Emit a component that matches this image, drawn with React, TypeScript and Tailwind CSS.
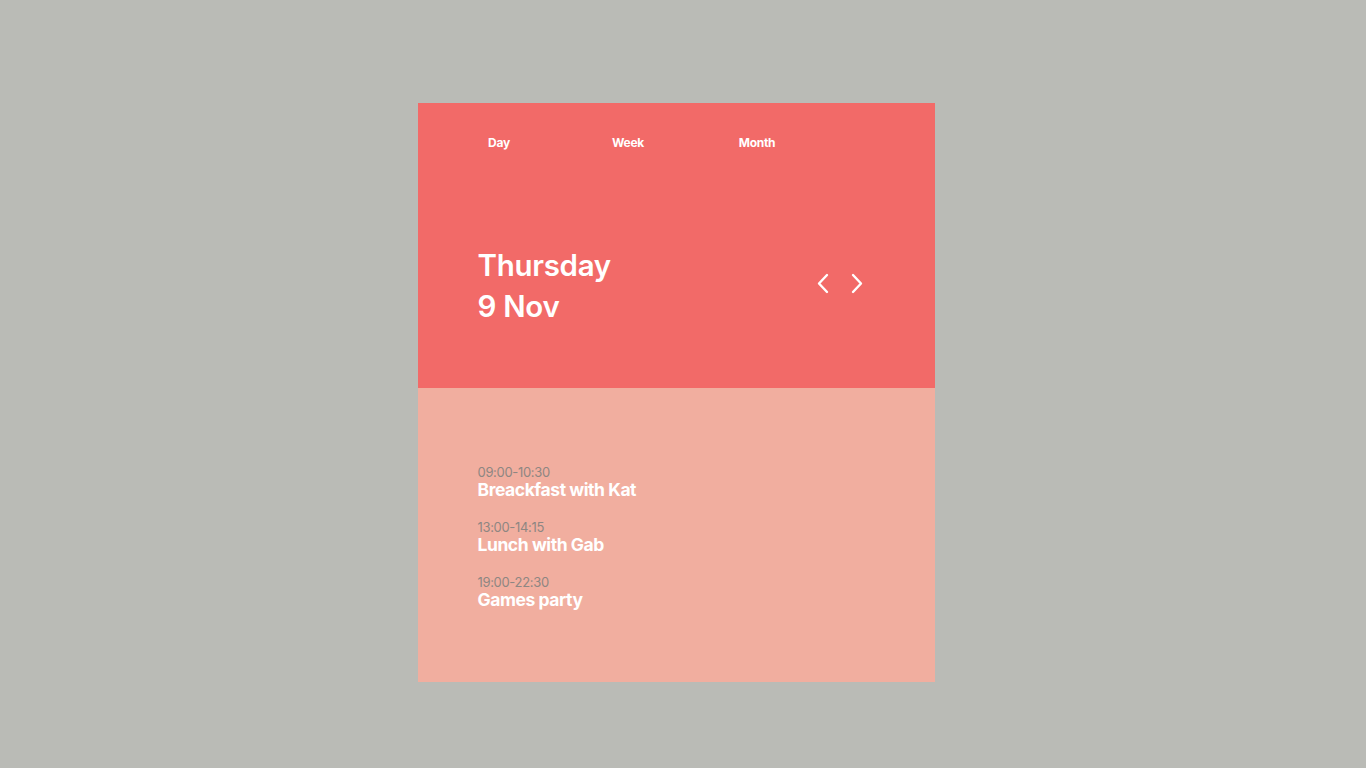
const events = [
  { time: '09:00-10:30', title: 'Breackfast with Kat' },
  { time: '13:00-14:15', title: 'Lunch with Gab' },
  { time: '19:00-22:30', title: 'Games party' },
];

const tabs = ['Day', 'Week', 'Month'];

export default function App() {
  return (
    <div
      className="min-h-screen w-full bg-[#babbb6] flex justify-center pt-[103px] pr-[14px]"
      style={{ fontFamily: 'Inter, "Noto Sans", sans-serif' }}
    >
      <div className="w-[517px] h-[579px] flex flex-col">
        <div className="h-[285px] bg-[#f26a68] flex flex-col">
          <nav className="flex pt-[31px] pl-[17px]">
            {tabs.map((tab) => (
              <button
                key={tab}
                className="w-[129px] text-center text-[12px] font-bold text-white tracking-tight"
              >
                {tab}
              </button>
            ))}
          </nav>
          <div className="flex items-center justify-between pl-[60px] pr-[72px] mt-[93px]">
            <h1 className="text-[29.5px] leading-[41px] font-semibold text-white tracking-[-0.01em]">
              Thursday
              <br />
              9 Nov
            </h1>
            <div className="flex items-center gap-[22px] mt-[-6px]">
              <svg width="12" height="21" viewBox="0 0 12 21" fill="none">
                <path d="M10 2L2 10.5l8 8.5" stroke="white" strokeWidth="2.4" strokeLinecap="round" strokeLinejoin="round" />
              </svg>
              <svg width="12" height="21" viewBox="0 0 12 21" fill="none">
                <path d="M2 2l8 8.5-8 8.5" stroke="white" strokeWidth="2.4" strokeLinecap="round" strokeLinejoin="round" />
              </svg>
            </div>
          </div>
        </div>
        <div className="flex-1 bg-[#f1ae9f] pl-[60px] pt-[76px] flex flex-col gap-[19px]">
          {events.map((e) => (
            <div key={e.time} className="flex flex-col">
              <span className="text-[13px] leading-[16px] text-[#8e8682] tracking-tight">{e.time}</span>
              <span className="text-[17.5px] leading-[20px] font-bold text-white tracking-tight">{e.title}</span>
            </div>
          ))}
        </div>
      </div>
    </div>
  );
}
